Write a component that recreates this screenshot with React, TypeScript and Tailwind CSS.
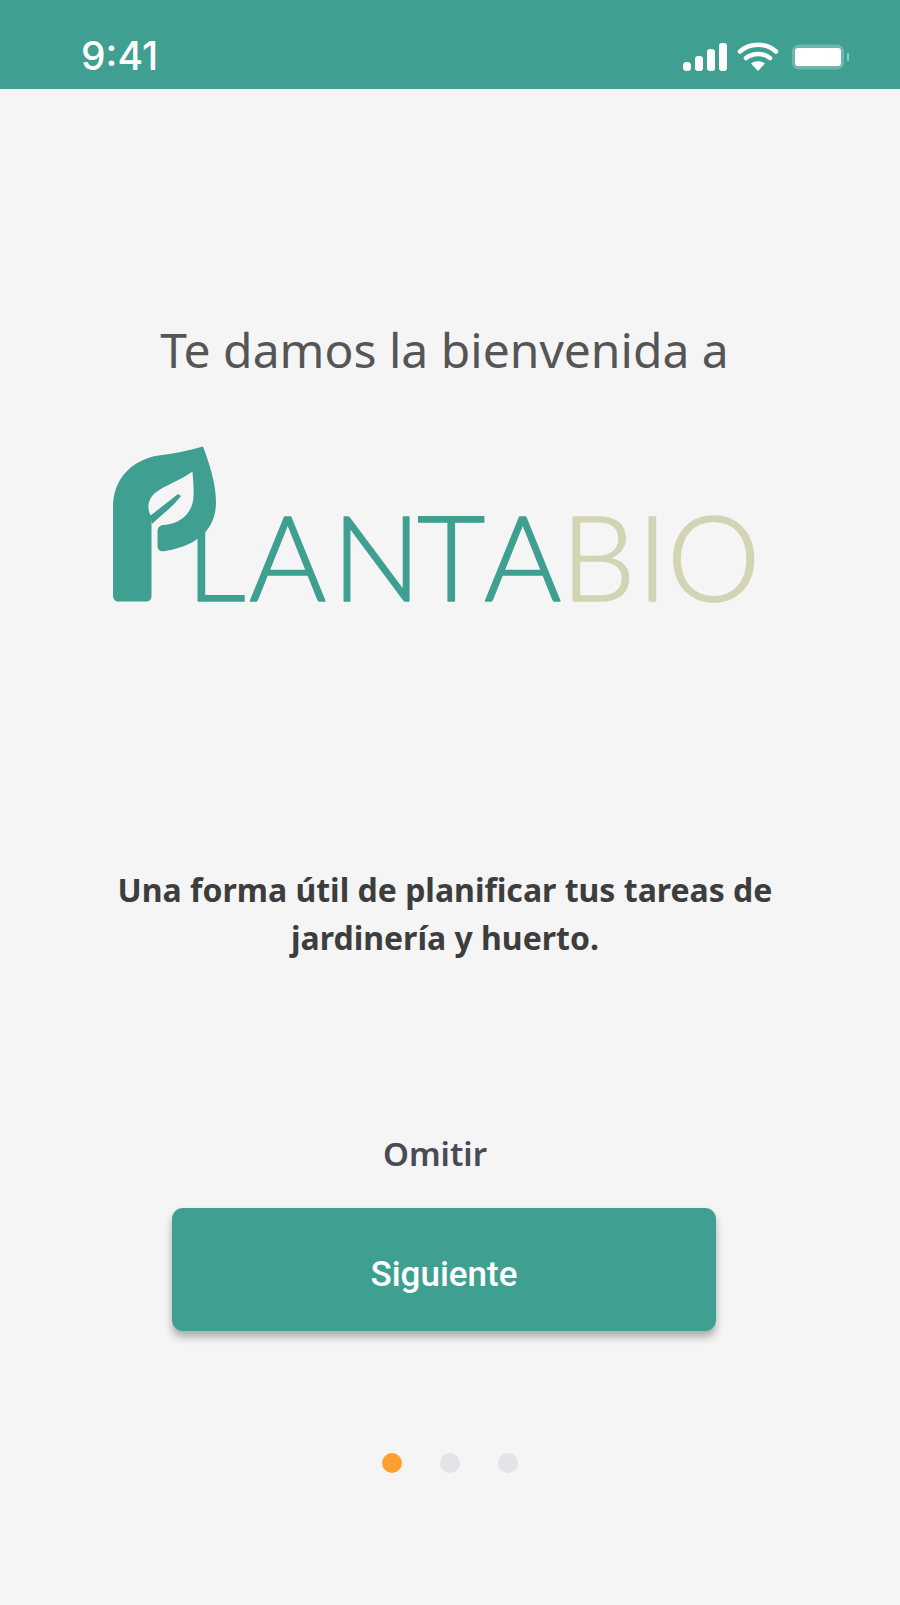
import React from "react";

function StatusIcons() {
	return (
		<svg width="172" height="30" viewBox="0 0 172 30" fill="#ffffff" aria-hidden="true">
			{/* signal */}
			<rect x="1" y="20" width="8" height="9" rx="3.5" />
			<rect x="13" y="14" width="8" height="15" rx="3" />
			<rect x="25" y="7" width="8" height="22" rx="3" />
			<rect x="37" y="1" width="8" height="28" rx="3" />
			{/* wifi */}
			<path d="M58 9.5C68 0.5 84 0.5 94 9.5" fill="none" stroke="#ffffff" strokeWidth="4.5" strokeLinecap="round" />
			<path d="M64 16C71 10.5 81 10.5 88 16" fill="none" stroke="#ffffff" strokeWidth="4.5" strokeLinecap="round" />
			<path d="M69 21.5C73 18.5 79 18.5 83 21.5L76 29Z" />
			{/* battery */}
			<rect x="110" y="2.5" width="52" height="25" rx="7" fill="#ffffff" fillOpacity="0.25" />
			<rect x="113" y="6" width="46" height="18" rx="3" />
			<rect x="165" y="11" width="2" height="8" rx="1" fillOpacity="0.45" />
		</svg>
	);
}

function Logo() {
	return (
		<svg width="900" height="200" viewBox="0 0 900 200">
			<text
				x="186 249 332 417 484 561 637 667"
				y="181"
				fontFamily="Lato, sans-serif"
				fontWeight="300"
				fontSize="118"
				fill="#3f9f91"
				stroke="#3f9f91"
				strokeWidth="1.6"
				strokeLinejoin="round"
			>
				LANTA
				<tspan fill="#d2d4b4" stroke="#d2d4b4">BIO</tspan>
			</text>
			{/* P with leaf */}
			<path
				fill="#3f9f91"
				d="M113 175V90C112 60 130 42 155 36C172 34 188 31 203 26.5C210 45 216 65 216 82C216 100 208 124 165 131C160 132 157.5 130 157.5 126V112C157.5 107 160 105 164 105C178 104 193 95 193.5 76C194 68 193 60 192.5 51.5C180 61 165 65 155 73C148 79 147 88 150 94L151.5 97V176C151.5 180 149 181.5 146 181.5H118C115 181.5 113 179 113 175Z"
			/>
			<path fill="#3f9f91" d="M150 96L178 74L181 76C172 88 160 96 152 104Z" />
		</svg>
	);
}

export default function App() {
	return (
		<div className="w-[900px] h-[1605px] bg-[#f5f5f5] flex flex-col overflow-hidden">
			<header className="w-full h-[89px] shrink-0 bg-[#3f9f91] flex items-start justify-between pl-[81px] pr-[46px] pt-[34px]">
				<span className="text-white text-[39px] leading-[44px] font-medium font-['Inter',sans-serif]">9:41</span>
				<div className="pt-[8px]">
					<StatusIcons />
				</div>
			</header>

			<h1 className="mt-[232px] w-[889px] text-center text-[#555555] text-[48px] leading-[58px] font-normal font-['Noto_Sans',sans-serif]">
				Te damos la bienvenida a
			</h1>

			<div className="mt-[41px] w-full h-[200px]">
				<Logo />
			</div>

			<p className="mt-[246px] w-[890px] text-center text-[#3d3d3d] text-[32px] leading-[48px] font-bold font-['Noto_Sans',sans-serif]">
				Una forma útil de planificar tus tareas de
				<br />
				jardinería y huerto.
			</p>

			<div className="w-[888px] flex flex-col items-center">
				<button className="mt-[170px] mr-[18px] text-[#4a4a57] text-[33px] leading-[44px] font-semibold font-['Noto_Sans',sans-serif]">
					Omitir
				</button>

				<button className="mt-[32px] w-[544px] h-[123px] rounded-[11px] bg-[#3f9f91] shadow-[0_6px_8px_rgba(0,0,0,0.3)] pt-[12px] text-white text-[35px] font-medium font-['Roboto',sans-serif]">
					Siguiente
				</button>

				<div className="mt-[122px] ml-[11px] flex gap-[38px]">
					<span className="w-[20px] h-[20px] rounded-full bg-[#ff9f2e]" />
					<span className="w-[20px] h-[20px] rounded-full bg-[#e3e4e8]" />
					<span className="w-[20px] h-[20px] rounded-full bg-[#e3e4e8]" />
				</div>
			</div>
		</div>
	);
}
